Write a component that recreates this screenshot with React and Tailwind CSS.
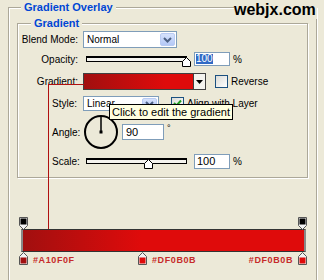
import React from "react";

const Chevron = () => (
  <svg width="9" height="6" viewBox="0 0 9 6">
    <path d="M1 1 L4.5 4.5 L8 1" fill="none" stroke="#4d6185" strokeWidth="2" />
  </svg>
);

const Select = ({ value, width }) => (
  <div className={`flex items-center h-full bg-white border border-[#7f9db9] ${width}`}>
    <span className="flex-1 pl-[3px] text-[10px] leading-none">{value}</span>
    <span className="flex items-center justify-center w-[15px] h-[calc(100%-2px)] mr-px rounded-[2px] bg-[linear-gradient(#d6e2fc,#b4c8f6)] border border-[#b9cbf3]">
      <Chevron />
    </span>
  </div>
);

const Thumb = () => (
  <svg width="9" height="10" viewBox="0 0 9 10">
    <path d="M0.5 9.5 V4.5 L4.5 0.5 L8.5 4.5 V9.5 Z" fill="#fff" stroke="#000" />
  </svg>
);

const Slider = ({ pos }) => (
  <div className="relative ml-[3px] w-[101px] h-full">
    <div className="absolute left-0 right-0 top-[4px] h-[6px] bg-[#f4f3ee] border border-black border-t-2" />
    <div className="absolute top-[5px]" style={{ left: pos }}>
      <Thumb />
    </div>
  </div>
);

const Checkbox = ({ checked }) => (
  <span className="flex items-center justify-center w-[13px] h-[13px] border border-[#1c5180] bg-[linear-gradient(135deg,#dcdcd7,#fff)]">
    {checked && (
      <svg width="9" height="9" viewBox="0 0 9 9">
        <path d="M1 4 L3.5 6.5 L8 1.5" fill="none" stroke="#21a121" strokeWidth="2" />
      </svg>
    )}
  </span>
);

const StopTop = () => (
  <svg width="9" height="13" viewBox="0 0 9 13">
    <path d="M0.5 0.5 H8.5 V8.5 L4.5 12.5 L0.5 8.5 Z" fill="#f2f2f2" stroke="#555" />
    <rect x="1.5" y="1.5" width="6" height="6" fill="#000" />
  </svg>
);

const StopBottom = ({ color }) => (
  <svg width="9" height="13" viewBox="0 0 9 13">
    <path d="M4.5 0.5 L8.5 4.5 V12.5 H0.5 V4.5 Z" fill="#f2f2f2" stroke="#555" />
    <rect x="1.5" y="5.5" width="6" height="6" fill={color} />
  </svg>
);

const StopLabel = ({ children }) => (
  <span className="text-[9px] leading-[10px] font-bold tracking-[0.6px] text-[#c62a2a]">{children}</span>
);

export default function App() {
  return (
    <div className="relative w-[324px] h-[280px] overflow-hidden bg-[#ece9d8] text-black font-['Liberation_Sans',Arial,sans-serif]">
      <div className="pl-[8px] pt-[1px]">
        <fieldset className="w-[309px] h-[300px] border border-[#aca899] shadow-[1px_1px_0_#fff,inset_1px_1px_0_#fff]">
          <legend className="ml-[12px] px-[3px] bg-[#ece9d8] text-[11px] leading-[13px] font-bold text-[#0046d5]">
            Gradient Overlay
          </legend>

          {/* inner group */}
          <fieldset className="ml-[8px] mt-[3px] w-[291px] pb-[8px] border border-[#aca899] shadow-[1px_1px_0_#fff,inset_1px_1px_0_#fff]">
            <legend className="ml-[13px] px-[3px] bg-[#ece9d8] text-[11px] leading-[13px] font-bold text-[#0046d5]">
              Gradient
            </legend>

            <div className="mt-[1px] flex items-center h-[17px] text-[10px]">
              <span className="w-[60px] text-right">Blend Mode:</span>
              <div className="ml-[5px] h-full">
                <Select value="Normal" width="w-[94px]" />
              </div>
            </div>

            <div className="mt-[4px] flex items-center h-[14px] text-[10px]">
              <span className="w-[60px] text-right">Opacity:</span>
              <div className="ml-[5px] flex items-center h-full">
                <Slider pos={96} />
                <div className="ml-[7px] w-[36px] h-[14px] flex items-center pl-px bg-white border border-[#7f9db9]">
                  <span className="bg-[#316ac5] text-white leading-[10px]">100</span>
                </div>
                <span className="ml-[3px]">%</span>
              </div>
            </div>

            <div className="mt-[7px] flex items-center h-[17px] text-[10px]">
              <span className="w-[60px] text-right">Gradient:</span>
              <div className="ml-[5px] flex h-full">
                <div className="w-[111px] h-full border border-[#404040] bg-[linear-gradient(to_right,#a10f0f,#df0b0b_75%)]" />
                <div className="w-[12px] h-full flex items-center justify-center bg-[#f4f3ee] border border-l-0 border-[#404040]">
                  <svg width="7" height="4" viewBox="0 0 7 4">
                    <path d="M0 0 H7 L3.5 4 Z" fill="#000" />
                  </svg>
                </div>
                <div className="ml-[9px] flex items-center gap-[3px]">
                  <Checkbox />
                  <span>Reverse</span>
                </div>
              </div>
            </div>

            <div className="mt-[6px] flex items-center h-[15px] text-[10px]">
              <span className="ml-[34px] w-[31px]">Style:</span>
              <div className="h-full">
                <Select value="Linear" width="w-[76px]" />
              </div>
              <div className="ml-[12px] flex items-center gap-[3px]">
                <Checkbox checked />
                <span>Align with Layer</span>
              </div>
            </div>

            <div className="mt-[3px] flex items-center h-[36px] text-[10px]">
              <span className="ml-[34px] w-[31px]">Angle:</span>
              <svg width="36" height="36" viewBox="0 0 36 36">
                <circle cx="18" cy="18" r="16" fill="none" stroke="#000" strokeWidth="2" />
                <line x1="18" y1="18" x2="18" y2="2" stroke="#000" strokeWidth="1.5" />
                <rect x="16.5" y="16.5" width="3" height="3" fill="#000" />
              </svg>
              <div className="ml-[3px] w-[42px] h-[16px] flex items-center pl-[3px] bg-white border border-[#7f9db9] text-[11px]">
                90
              </div>
              <span className="ml-[3px] self-start mt-[8px] text-[9px]">°</span>
            </div>

            <div className="mt-[4px] flex items-center h-[15px] text-[10px]">
              <span className="ml-[34px] w-[31px]">Scale:</span>
              <Slider pos={58} />
              <div className="ml-[7px] w-[36px] h-[15px] flex items-center pl-[2px] bg-white border border-[#7f9db9] text-[11px]">
                100
              </div>
              <span className="ml-[3px]">%</span>
            </div>
          </fieldset>

          {/* gradient editor */}
          <div className="ml-[10px] mt-[39px] w-[288px]">
            <div className="flex justify-between">
              <StopTop />
              <StopTop />
            </div>
            <div className="ml-[2px] mr-[1px] h-[23px] -mt-px border border-[#333] border-x-[#888] border-x-2 bg-[linear-gradient(to_right,#a10f0f,#df0b0b_42%)]" />
            <div className="flex items-end">
              <div className="w-[119px] flex items-end gap-[5px]">
                <StopBottom color="#a10f0f" />
                <StopLabel>#A10F0F</StopLabel>
              </div>
              <div className="flex items-end gap-[5px]">
                <StopBottom color="#df0b0b" />
                <StopLabel>#DF0B0B</StopLabel>
              </div>
              <div className="ml-auto flex items-end gap-[5px]">
                <StopLabel>#DF0B0B</StopLabel>
                <StopBottom color="#df0b0b" />
              </div>
            </div>
          </div>
        </fieldset>
      </div>

      {/* watermark */}
      <span className="absolute top-[1px] left-[234px] pr-[1px] bg-[#ece9d8] text-[16px] leading-[18px] font-bold">
        webjx.com
      </span>

      {/* callout line from swatch to editor bar */}
      <div className="absolute left-[48px] top-[84px] w-[36px] h-px bg-[#b01010]" />
      <div className="absolute left-[48px] top-[84px] w-px h-[145px] bg-[#b01010]" />

      {/* tooltip */}
      <div className="absolute left-[109px] top-[104px] h-[16px] px-[2px] flex items-center bg-[#ffffe1] border border-black text-[11px] leading-none">
        Click to edit the gradient
      </div>
    </div>
  );
}
